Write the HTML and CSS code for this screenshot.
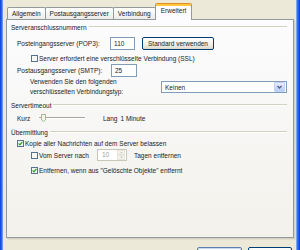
FILE: index.html
```html
<!DOCTYPE html>
<html lang="de">

<head>
    <meta charset="UTF-8">
    <meta name="viewport" content="width=device-width, initial-scale=1.0">
    <title>Eigenschaften - Erweitert</title>
    <link rel="stylesheet" href="styles.css">
</head>

<body>
    <div class="frame frame-left"></div>

    <div class="dialog">
        <!-- Tabs -->
        <div class="tabs">
            <div class="tab">Allgemein</div>
            <div class="tab">Postausgangsserver</div>
            <div class="tab">Verbindung</div>
            <div class="tab active">Erweitert</div>
        </div>

        <div class="panel">
            <!-- Serveranschlussnummern -->
            <div class="legend"><span>Serveranschlussnummern</span><span class="rule"></span></div>

            <div class="row r-pop">
                <span class="port-label">Posteingangsserver (POP3):</span>
                <span class="field port">110</span>
                <span class="btn std">Standard verwenden</span>
            </div>

            <div class="row r-ssl">
                <svg class="cb" viewBox="0 0 7 7"><rect x="0.5" y="0.5" width="6" height="6" fill="#f7f7f4" stroke="#56728f"/></svg>
                <span class="cb-text">Server erfordert eine verschlüsselte Verbindung (SSL)</span>
            </div>

            <div class="row r-smtp">
                <span class="port-label smtp">Postausgangsserver (SMTP):</span>
                <span class="field port smtp-port">25</span>
            </div>

            <div class="row r-enc">
                <span class="enc-label">Verwenden Sie den folgenden<br>verschlüsselten Verbindungstyp:</span>
                <span class="field select">
                    <span class="select-value">Keinen</span>
                    <span class="select-arrow">
                        <svg viewBox="0 0 8 8"><path d="M2 3 L4 5 L6 3" fill="none" stroke="#4d6185" stroke-width="1.3"/></svg>
                    </span>
                </span>
            </div>

            <!-- Servertimeout -->
            <div class="legend lg-timeout"><span>Servertimeout</span><span class="rule"></span></div>

            <div class="row r-slider">
                <span class="slider-short">Kurz</span>
                <span class="slider">
                    <span class="track"></span>
                    <svg class="thumb" viewBox="0 0 5 8"><path d="M0.5 0.5 H4.5 V6 L2.5 7.5 L0.5 6 Z" fill="#f4f4ef" stroke="#8fc28f"/></svg>
                </span>
                <span class="slider-long">Lang</span>
                <span>1 Minute</span>
            </div>

            <!-- Übermittlung -->
            <div class="legend lg-send"><span>Übermittlung</span><span class="rule"></span></div>

            <div class="row r-copy">
                <svg class="cb" viewBox="0 0 7 7"><rect x="0.5" y="0.5" width="6" height="6" fill="#f7f7f4" stroke="#56728f"/><path d="M1.6 3.3 L2.9 4.8 L5.4 1.8" fill="none" stroke="#21a121" stroke-width="1.2"/></svg>
                <span class="cb-text">Kopie aller Nachrichten auf dem Server belassen</span>
            </div>

            <div class="row r-after">
                <svg class="cb" viewBox="0 0 7 7"><rect x="0.5" y="0.5" width="6" height="6" fill="#f7f7f4" stroke="#56728f"/></svg>
                <span class="cb-text days-label">Vom Server nach</span>
                <span class="field spin">
                    <span class="spin-value">10</span>
                    <span class="spin-buttons">
                        <span class="spin-btn"><svg viewBox="0 0 6 4"><path d="M1 3 L3 1 L5 3 Z" fill="#c4c2b6"/></svg></span>
                        <span class="spin-btn"><svg viewBox="0 0 6 4"><path d="M1 1 L3 3 L5 1 Z" fill="#c4c2b6"/></svg></span>
                    </span>
                </span>
                <span class="days-after">Tagen entfernen</span>
            </div>

            <div class="row r-del">
                <svg class="cb" viewBox="0 0 7 7"><rect x="0.5" y="0.5" width="6" height="6" fill="#f7f7f4" stroke="#56728f"/><path d="M1.6 3.3 L2.9 4.8 L5.4 1.8" fill="none" stroke="#21a121" stroke-width="1.2"/></svg>
                <span class="cb-text">Entfernen, wenn aus "Gelöschte Objekte" entfernt</span>
            </div>
        </div>

        <!-- Dialog buttons -->
        <div class="buttons">
            <span class="btn dlg default">OK</span>
            <span class="btn dlg">Abbrechen</span>
        </div>
    </div>

    <div class="frame frame-right"></div>
</body>

</html>
```

FILE: styles.css
```css
body {
    margin: 0;
    width: 300px;
    height: 250px;
    overflow: hidden;
    display: flex;
    background-color: #ece9d8;
    font-family: "Liberation Sans", Arial, sans-serif;
    font-size: 6.5px;
    color: #1a1a1a;
}

/* Window frame */
.frame-left {
    width: 3px;
    background: linear-gradient(to right, #0a3fd6, #2d6ff0 60%, #8fb2f2);
}

.frame-right {
    width: 4px;
    background: linear-gradient(to right, #9dbcf4, #2d6ff0 40%, #0a3fd6);
}

.dialog {
    flex: 1;
    padding: 3px 2px 0 3px;
}

/* Tabs */
.tabs {
    display: flex;
    align-items: flex-end;
    height: 16px;
    padding-left: 1px;
}

.tab {
    height: 12px;
    line-height: 12px;
    padding: 0 4px;
    box-sizing: border-box;
    border: 1px solid #919b9c;
    border-bottom: none;
    border-radius: 2px 2px 0 0;
    background: linear-gradient(#ffffff, #ecebe6);
    white-space: nowrap;
}

.tab + .tab {
    margin-left: -1px;
}

.tab.active {
    position: relative;
    z-index: 1;
    height: 17px;
    line-height: 14px;
    margin-bottom: -1px;
    padding: 0 5px;
    background: #fcfcfe;
    border-top-color: #e68b2c;
    box-shadow: inset 0 2px 0 #ffc83c;
}

/* Panel */
.panel {
    height: 219px;
    box-sizing: border-box;
    border: 1px solid #919b9c;
    background: linear-gradient(#fcfcfe, #f2f1eb);
    padding: 2px 5px 0 4px;
    box-shadow: 1px 1px 0 #d3d0c0, 2px 2px 0 #e1ded0;
}

.legend {
    display: flex;
    align-items: center;
    height: 10px;
    gap: 2px;
    margin-right: 1px;
}

.legend .rule {
    flex: 1;
    border-top: 1px solid #d0d0bf;
    border-bottom: 1px solid #ffffff;
}

.lg-timeout {
    margin-top: 3px;
}

.lg-send {
    margin-top: 4px;
}

.row {
    display: flex;
    align-items: center;
    white-space: nowrap;
}

.r-pop {
    margin-top: 5px;
    height: 13px;
    padding-left: 6px;
}

.r-ssl {
    margin-top: 3px;
    height: 10px;
    padding-left: 20px;
}

.r-smtp {
    margin-top: 1px;
    height: 13px;
    padding-left: 6px;
}

.r-enc {
    height: 20px;
    padding-left: 19px;
}

.r-slider {
    margin-top: 3px;
    height: 10px;
    padding-left: 6px;
}

.r-copy {
    margin-top: 1px;
    height: 10px;
    padding-left: 6px;
}

.r-after {
    margin-top: 1px;
    height: 12px;
    padding-left: 20px;
}

.r-del {
    margin-top: 4px;
    height: 10px;
    padding-left: 20px;
}

/* Fields */
.field {
    box-sizing: border-box;
    border: 1px solid #7f9db9;
    background: #ffffff;
}

.port-label {
    width: 93px;
}

.port-label.smtp {
    width: 94px;
}

.port {
    width: 25px;
    height: 13px;
    line-height: 11px;
    padding-left: 3px;
}

.smtp-port {
    width: 26px;
}

.btn {
    box-sizing: border-box;
    border: 1px solid #003c74;
    border-radius: 2px;
    background: linear-gradient(#ffffff, #f0efe8 60%, #dcd9cb);
    text-align: center;
}

.std {
    margin-left: 7px;
    width: 72px;
    height: 13px;
    line-height: 11px;
}

.cb {
    width: 7px;
    height: 7px;
    flex: none;
}

.cb-text {
    margin-left: 1px;
}

.enc-label {
    width: 131px;
    line-height: 10px;
    white-space: normal;
}

.select {
    display: flex;
    align-items: center;
    width: 126px;
    height: 12px;
    padding: 0 1px 0 3px;
}

.select-value {
    flex: 1;
}

.select-arrow {
    display: flex;
    width: 9px;
    height: 8px;
    border: 1px solid #c0d2f7;
    border-radius: 1px;
    background: linear-gradient(#e6edfd, #b7cbf6);
}

.select-arrow svg {
    width: 9px;
    height: 8px;
}

/* Slider */
.slider-short {
    width: 22px;
}

.slider {
    position: relative;
    display: flex;
    align-items: center;
    width: 46px;
    height: 10px;
    margin-right: 18px;
}

.track {
    width: 100%;
    height: 0;
    border-top: 1px solid #a8a698;
    border-bottom: 1px solid #ffffff;
}

.thumb {
    position: absolute;
    left: 2px;
    top: 1px;
    width: 5px;
    height: 8px;
}

.slider-long {
    margin-right: 3px;
}

/* Spinner */
.days-label {
    width: 58px;
}

.spin {
    display: flex;
    align-items: stretch;
    width: 30px;
    height: 12px;
    border-color: #c9c7ba;
    color: #a3a298;
}

.spin-value {
    flex: 1;
    line-height: 10px;
    padding-left: 4px;
}

.spin-buttons {
    display: flex;
    flex-direction: column;
    width: 8px;
    margin: 0 1px 0 0;
}

.spin-btn {
    flex: 1;
    display: flex;
    align-items: center;
    justify-content: center;
    background: #f4f3ee;
    border: 1px solid #e8e6dc;
}

.spin-btn svg {
    width: 5px;
    height: 3px;
}

.days-after {
    margin-left: 7px;
}

/* Bottom buttons */
.buttons {
    display: flex;
    justify-content: flex-end;
    gap: 6px;
    margin: 9px 2px 0 0;
}

.dlg {
    width: 45px;
    height: 14px;
    line-height: 11px;
}

.dlg + .dlg {
    width: 44px;
}

.dlg.default {
    border-color: #5c7fb5;
    box-shadow: inset 0 0 0 1px #c7d7f5;
}
```
